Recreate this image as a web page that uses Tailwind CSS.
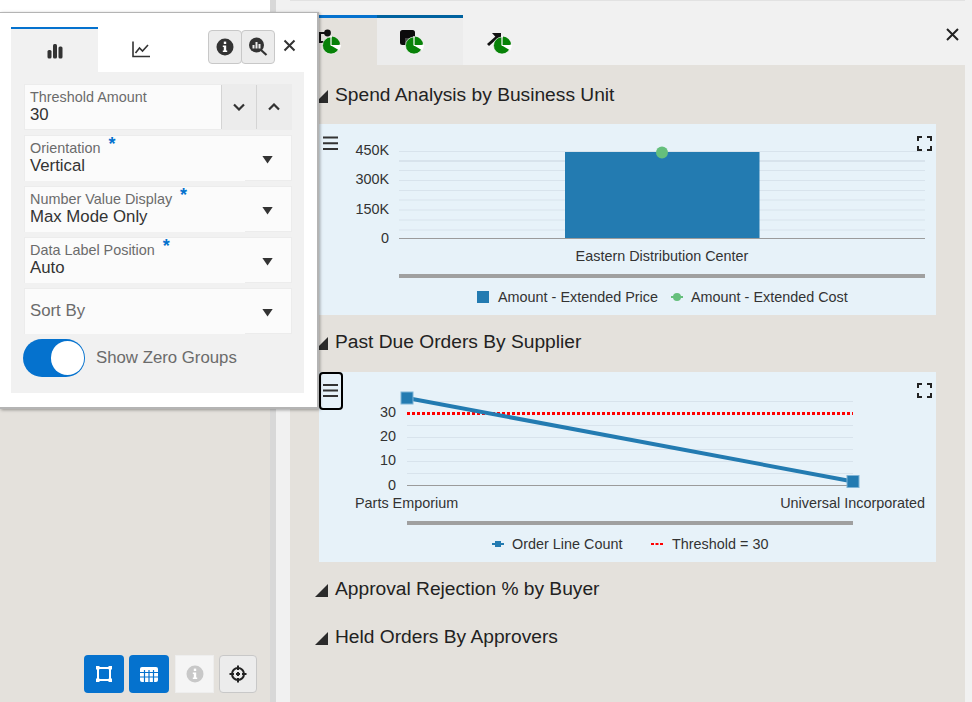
<!DOCTYPE html>
<html lang="en">
<head>
  <meta charset="UTF-8">
  <meta name="viewport" content="width=device-width, initial-scale=1.0">
  <title>Spend Analysis</title>
  <script src="https://cdn.jsdelivr.net/npm/@tailwindcss/browser@4"></script>
</head>
<body class="font-['Liberation_Sans',Arial,sans-serif] bg-[#f1f1f1] overflow-hidden">
<svg class="hidden">
  <symbol id="pie" viewBox="0 0 20 20">
    <circle cx="10" cy="10.500" r="8.500" fill="#088208" stroke="#fff" stroke-width="0.600"/>
    <path d="M10 10.500 V1 M10 10.500 H20" stroke="#fff" stroke-width="1.200" fill="none"/>
    <path d="M11 1.500 A8.500 8.500 0 0 1 19 9.500 H11 Z" fill="#088208"/>
    <path d="M10 10.500 L20 10.500 L18.500 15.500 Z" fill="#fff"/>
  </symbol>
</svg>
<div class="relative flex w-[972px] h-[702px]">

  <!-- left panel -->
  <div class="w-[270px] h-full flex flex-col bg-[#e4e1dc]">
    <div class="h-3 bg-white"></div>
    <div class="flex-1 flex items-end justify-end pr-[13px] pb-[9px] gap-[5px]">
      <button class="w-10 h-[38px] rounded-sm bg-[#0572ce] flex items-center justify-center">
        <svg width="18" height="18" viewBox="0 0 18 18" fill="none" stroke="#fff" stroke-width="2"><rect x="3" y="3" width="12" height="12"/><rect x="1" y="1" width="3.500" height="3.500" fill="#fff" stroke="none"/><rect x="13.500" y="1" width="3.500" height="3.500" fill="#fff" stroke="none"/><rect x="1" y="13.500" width="3.500" height="3.500" fill="#fff" stroke="none"/><rect x="13.500" y="13.500" width="3.500" height="3.500" fill="#fff" stroke="none"/></svg>
      </button>
      <button class="w-10 h-[38px] rounded-sm bg-[#0572ce] flex items-center justify-center">
        <svg width="18" height="15" viewBox="0 0 18 15"><rect width="18" height="15" rx="2" fill="#fff"/><path d="M0 5.500 H18 M0 10 H18 M4.500 3 V15 M9 3 V15 M13.500 3 V15" stroke="#0572ce" stroke-width="1.200"/></svg>
      </button>
      <button class="w-[39px] h-[38px] ml-[1px] bg-[#f5f5f5] border border-[#eee] flex items-center justify-center">
        <svg width="18" height="18" viewBox="0 0 18 18"><circle cx="9" cy="9" r="8.500" fill="#c8c8c8"/><rect x="7.800" y="3.600" width="2.400" height="2.400" fill="#fff"/><path d="M6.800 7.500 H10.200 V12.400 H11.200 V14 H6.800 V12.400 H7.800 V9 H6.800 Z" fill="#fff"/></svg>
      </button>
      <button class="w-[38px] h-[38px] rounded-sm bg-[#ececec] border border-[#c8c8c8] flex items-center justify-center">
        <svg width="18" height="18" viewBox="0 0 18 18" fill="none" stroke="#222" stroke-width="2"><circle cx="9" cy="9" r="6"/><path d="M9 0.500 V5 M9 13 V17.500 M0.500 9 H5 M13 9 H17.500 M9 7 V11 M7 9 H11"/></svg>
      </button>
    </div>
  </div>

  <!-- splitter -->
  <div class="w-1.5 h-full bg-[#d8d8d8]"></div>
  <div class="w-[14px] h-full bg-[#f1f1f1]"></div>

  <!-- right panel -->
  <div class="w-[675px] h-full flex flex-col">
    <div class="h-[65px] flex items-end border-t border-[#e2e2e2] relative">
      <div class="w-[87px] h-[50px] bg-[#e4e1dc] border-t-[3px] border-[#0572ce] flex items-start">
        <svg class="ml-[28px] mt-[11px]" width="14" height="16" viewBox="0 0 14 16"><circle cx="9.500" cy="4" r="3.400" fill="#111"/><path d="M0 4 H8 M2 4 V13 H8" stroke="#111" stroke-width="2" fill="none"/></svg>
        <svg class="mt-[17px] -ml-[11px]" width="20" height="20"><use href="#pie"/></svg>
      </div>
      <div class="w-[86px] h-[50px] bg-[#ececec] border-t-[3px] border-[#00629f] flex items-start">
        <svg class="ml-[23px] mt-[12px]" width="16" height="16" viewBox="0 0 16 16"><rect width="15" height="15" rx="2.500" fill="#0b0b0b"/><rect x="5" y="8" width="10" height="7" fill="#444"/></svg>
        <svg class="mt-[17px] -ml-[12px]" width="20" height="20"><use href="#pie"/></svg>
      </div>
      <div class="w-[86px] h-[50px] flex items-start">
        <svg class="ml-[24px] mt-[17px]" width="15" height="15" viewBox="0 0 15 15"><path d="M1 13 L10 5" stroke="#111" stroke-width="3"/><path d="M5 1 H14 V11 Z" fill="#111"/></svg>
        <svg class="mt-[20px] -ml-[10px]" width="20" height="20"><use href="#pie"/></svg>
      </div>
      <svg class="absolute left-[656px] top-[27px]" width="13" height="13" viewBox="0 0 13 13" stroke="#222" stroke-width="2"><path d="M1 1 L12 12 M12 1 L1 12"/></svg>
    </div>

    <div class="flex-1 bg-[#e4e1dc] pt-[6px] text-[#222]">
      <div class="h-12 pl-[25px] flex items-center gap-[7px] text-[19.2px]">
        <svg class="mt-[2px]" width="13" height="13" viewBox="0 0 13 13"><path d="M13 0 V13 H0 Z" fill="#2b2b2b"/></svg>
        <span>Spend Analysis by Business Unit</span>
      </div>
      <div class="ml-[29px] mt-[5px] w-[617px] h-[191px] bg-[#e7f2f9]">
        <svg width="617" height="191" viewBox="319 124 617 191" font-size="14.400" fill="#333">
          <path d="M323 137.500 H338 M323 143.300 H338 M323 149 H338" stroke="#333" stroke-width="2"/>
          <path d="M918 141 V137 H922 M927 137 H931 V141 M918 146 V150 H922 M927 150 H931 V146" stroke="#222" stroke-width="2" fill="none"/>
          <path d="M399 151.500 H925 M399 170.500 H925 M399 180.500 H925 M399 190.500 H925 M399 200 H925 M399 210 H925 M399 220 H925 M399 230 H925" stroke="#d8e3ec" stroke-width="1"/>
          <path d="M399 161 H925" stroke="#d8e3ec" stroke-width="2"/>
          <path d="M399 238.500 H925" stroke="#9b9b9b" stroke-width="1"/>
          <rect x="565" y="152" width="194.500" height="86" fill="#237bb1"/>
          <circle cx="662" cy="152.500" r="6" fill="#65bf7c"/>
          <text x="389" y="155" text-anchor="end">450K</text>
          <text x="389" y="184" text-anchor="end">300K</text>
          <text x="389" y="214" text-anchor="end">150K</text>
          <text x="389" y="243" text-anchor="end">0</text>
          <text x="662" y="261" text-anchor="middle">Eastern Distribution Center</text>
          <rect x="399" y="274" width="526" height="4" fill="#a0a0a0"/>
          <rect x="477" y="291" width="12" height="12" fill="#237bb1"/>
          <text x="498" y="302">Amount - Extended Price</text>
          <path d="M671 297 H683" stroke="#65bf7c" stroke-width="2"/>
          <circle cx="677" cy="297" r="4" fill="#65bf7c"/>
          <text x="691" y="302">Amount - Extended Cost</text>
        </svg>
      </div>

      <div class="h-12 mt-[3px] pl-[25px] flex items-center gap-[7px] text-[19.2px]">
        <svg class="mt-[2px]" width="13" height="13" viewBox="0 0 13 13"><path d="M13 0 V13 H0 Z" fill="#2b2b2b"/></svg>
        <span>Past Due Orders By Supplier</span>
      </div>
      <div class="ml-[29px] mt-[6px] w-[617px] h-[190px] bg-[#e7f2f9]">
        <svg width="617" height="190" viewBox="319 372 617 190" font-size="14.400" fill="#333">
          <rect x="320" y="373" width="22" height="36" rx="3" fill="#e7f2f9" stroke="#000" stroke-width="2"/>
          <path d="M323 385 H338 M323 390.500 H338 M323 396 H338" stroke="#333" stroke-width="2"/>
          <path d="M918 388 V384 H922 M927 384 H931 V388 M918 393 V397 H922 M927 397 H931 V393" stroke="#222" stroke-width="2" fill="none"/>
          <path d="M407 401.500 H853 M407 425.500 H853 M407 437.500 H853 M407 449.500 H853 M407 461.500 H853 M407 473.500 H853" stroke="#d8e3ec" stroke-width="1"/>
          <path d="M407 485.500 H853" stroke="#9b9b9b" stroke-width="1"/>
          <path d="M407 413.500 H853" stroke="#f00" stroke-width="3" stroke-dasharray="3 2"/>
          <path d="M407 398 L853 481.500" stroke="#237bb1" stroke-width="4"/>
          <rect x="401" y="392" width="12" height="12" fill="#237bb1" stroke="#7fb4d6"/>
          <rect x="847" y="475.500" width="12" height="12" fill="#237bb1" stroke="#7fb4d6"/>
          <text x="396" y="417" text-anchor="end">30</text>
          <text x="396" y="441" text-anchor="end">20</text>
          <text x="396" y="465" text-anchor="end">10</text>
          <text x="396" y="490" text-anchor="end">0</text>
          <text x="355" y="508">Parts Emporium</text>
          <text x="925" y="508" text-anchor="end">Universal Incorporated</text>
          <rect x="407" y="521" width="446" height="4" fill="#a0a0a0"/>
          <path d="M492 544 H504" stroke="#237bb1" stroke-width="2"/>
          <rect x="495" y="541" width="6" height="6" fill="#237bb1"/>
          <text x="512" y="549">Order Line Count</text>
          <path d="M651 544 H663" stroke="#f00" stroke-width="2" stroke-dasharray="3 1.500"/>
          <text x="672" y="549">Threshold = 30</text>
        </svg>
      </div>

      <div class="h-12 mt-[3px] pl-[25px] flex items-center gap-[7px] text-[19.2px]">
        <svg class="mt-[2px]" width="13" height="13" viewBox="0 0 13 13"><path d="M13 0 V13 H0 Z" fill="#2b2b2b"/></svg>
        <span>Approval Rejection % by Buyer</span>
      </div>
      <div class="h-12 pl-[25px] flex items-center gap-[7px] text-[19.2px]">
        <svg class="mt-[2px]" width="13" height="13" viewBox="0 0 13 13"><path d="M13 0 V13 H0 Z" fill="#2b2b2b"/></svg>
        <span>Held Orders By Approvers</span>
      </div>
    </div>
  </div>
  <div class="w-[7px] h-full bg-[#f1f1f1]"></div>

  <!-- chart settings popup -->
  <div class="absolute left-0 top-3 w-[319px] h-[397px] bg-white border-t border-r-2 border-b-2 border-[#b4b4b4] shadow-[1px_1px_3px_rgba(0,0,0,0.35)] pt-[14px] pl-[11px]">
    <div class="flex h-[45px] relative">
      <div class="w-[87px] h-[45px] bg-[#f1f1f1] border-t-2 border-[#0572ce] flex items-center justify-center">
        <svg width="16" height="16" viewBox="0 0 16 16" fill="#333"><rect x="0.500" y="7" width="4" height="8.500" rx="1.500"/><rect x="6" y="1" width="4" height="14.500" rx="1.500"/><rect x="11.500" y="3.500" width="4" height="12" rx="1.500"/></svg>
      </div>
      <div class="w-[87px] h-[45px] flex items-center justify-center">
        <svg class="-ml-[2px]" width="18" height="17" viewBox="0 0 18 17" fill="none" stroke="#333" stroke-width="1.600"><path d="M1 0.500 V15.500 H18"/><path d="M3.500 12 L7.500 7 L10.500 10 L16 4"/></svg>
      </div>
      <div class="absolute left-[197px] top-[3px] flex">
        <button class="w-[34px] h-[34px] rounded-sm bg-[#ececec] border border-[#c8c8c8] flex items-center justify-center">
          <svg width="18" height="18" viewBox="0 0 18 18"><circle cx="9" cy="9" r="8.500" fill="#333"/><rect x="7.800" y="3.600" width="2.400" height="2.400" fill="#fff"/><path d="M6.800 7.500 H10.200 V12.400 H11.200 V14 H6.800 V12.400 H7.800 V9 H6.800 Z" fill="#fff"/></svg>
        </button>
        <button class="w-[34px] h-[34px] -ml-px rounded-sm bg-[#ececec] border border-[#c8c8c8] flex items-center justify-center">
          <svg width="20" height="20" viewBox="0 0 20 20"><circle cx="8.500" cy="8" r="7.500" fill="#333"/><path d="M13 13 L18.500 18" stroke="#333" stroke-width="2.200"/><path d="M5.500 8 V11.500 M8.500 5 V11.500 M11.500 7 V11.500" stroke="#ececec" stroke-width="2"/></svg>
        </button>
      </div>
      <svg class="absolute left-[272px] top-[12px]" width="13" height="13" viewBox="0 0 13 13" stroke="#333" stroke-width="2"><path d="M1.500 1.500 L11.500 11.500 M11.500 1.500 L1.500 11.500"/></svg>
    </div>

    <div class="w-[293px] h-[321px] bg-[#f1f1f1] pt-3 pl-[13px] pr-[12px] flex flex-col">
      <div class="h-[46px] flex bg-[#fbfbfb] border border-[#ececec]">
        <div class="flex-1 pl-[5px] pt-[4px]">
          <div class="text-[14.4px] leading-[16px] text-[#6b6b6b]">Threshold Amount</div>
          <div class="text-[16.8px] leading-[19px] text-[#333]">30</div>
        </div>
        <div class="w-[35px] bg-[#ececec] border-l border-[#d4d4d4] flex items-center justify-center">
          <svg width="12" height="8" viewBox="0 0 12 8" fill="none" stroke="#333" stroke-width="2.200"><path d="M1 1.500 L6 6.500 L11 1.500"/></svg>
        </div>
        <div class="w-[35px] bg-[#ececec] border-l border-[#d4d4d4] flex items-center justify-center">
          <svg width="12" height="8" viewBox="0 0 12 8" fill="none" stroke="#333" stroke-width="2.200"><path d="M1 6.500 L6 1.500 L11 6.500"/></svg>
        </div>
      </div>

      <div class="mt-[5px] h-[46px] flex bg-[#fbfbfb] border border-[#ececec]">
        <div class="w-[220px] h-[45px] bg-[#fbfbfb] pl-[5px] pt-[4px]">
          <div class="text-[14.4px] leading-[16px] text-[#6b6b6b]">Orientation <span class="relative -top-[3px] ml-[4px] text-[18px] leading-[10px] font-bold text-[#0572ce]">*</span></div>
          <div class="text-[16.8px] leading-[19px] text-[#333]">Vertical</div>
        </div>
        <div class="flex-1 flex items-center justify-end pr-[18px] pt-[3px]"><div class="w-[11px] h-2 bg-[#333] [clip-path:polygon(0_0,100%_0,50%_100%)]"></div></div>
      </div>

      <div class="mt-[5px] h-[46px] flex bg-[#fbfbfb] border border-[#ececec]">
        <div class="w-[220px] h-[45px] bg-[#fbfbfb] pl-[5px] pt-[4px]">
          <div class="text-[14.4px] leading-[16px] text-[#6b6b6b]">Number Value Display <span class="relative -top-[3px] ml-[4px] text-[18px] leading-[10px] font-bold text-[#0572ce]">*</span></div>
          <div class="text-[16.8px] leading-[19px] text-[#333]">Max Mode Only</div>
        </div>
        <div class="flex-1 flex items-center justify-end pr-[18px] pt-[3px]"><div class="w-[11px] h-2 bg-[#333] [clip-path:polygon(0_0,100%_0,50%_100%)]"></div></div>
      </div>

      <div class="mt-[5px] h-[46px] flex bg-[#fbfbfb] border border-[#ececec]">
        <div class="w-[220px] h-[45px] bg-[#fbfbfb] pl-[5px] pt-[4px]">
          <div class="text-[14.4px] leading-[16px] text-[#6b6b6b]">Data Label Position <span class="relative -top-[3px] ml-[4px] text-[18px] leading-[10px] font-bold text-[#0572ce]">*</span></div>
          <div class="text-[16.8px] leading-[19px] text-[#333]">Auto</div>
        </div>
        <div class="flex-1 flex items-center justify-end pr-[18px] pt-[3px]"><div class="w-[11px] h-2 bg-[#333] [clip-path:polygon(0_0,100%_0,50%_100%)]"></div></div>
      </div>

      <div class="mt-[5px] h-[46px] flex bg-[#fbfbfb] border border-[#ececec]">
        <div class="w-[220px] h-[45px] bg-[#fbfbfb] pl-[5px] pb-[2px] flex items-center text-[16.8px] text-[#6b6b6b]">Sort By</div>
        <div class="flex-1 flex items-center justify-end pr-[18px] pt-[3px]"><div class="w-[11px] h-2 bg-[#333] [clip-path:polygon(0_0,100%_0,50%_100%)]"></div></div>
      </div>

      <div class="mt-[5px] flex items-center -ml-px">
        <div class="w-[62px] h-[38px] rounded-full bg-[#0572ce] relative">
          <div class="absolute right-[1px] top-[2px] w-[33px] h-[34px] rounded-full bg-white"></div>
        </div>
        <span class="ml-[11px] text-[16.8px] text-[#6b6b6b]">Show Zero Groups</span>
      </div>
    </div>
  </div>
</div>
</body>
</html>
